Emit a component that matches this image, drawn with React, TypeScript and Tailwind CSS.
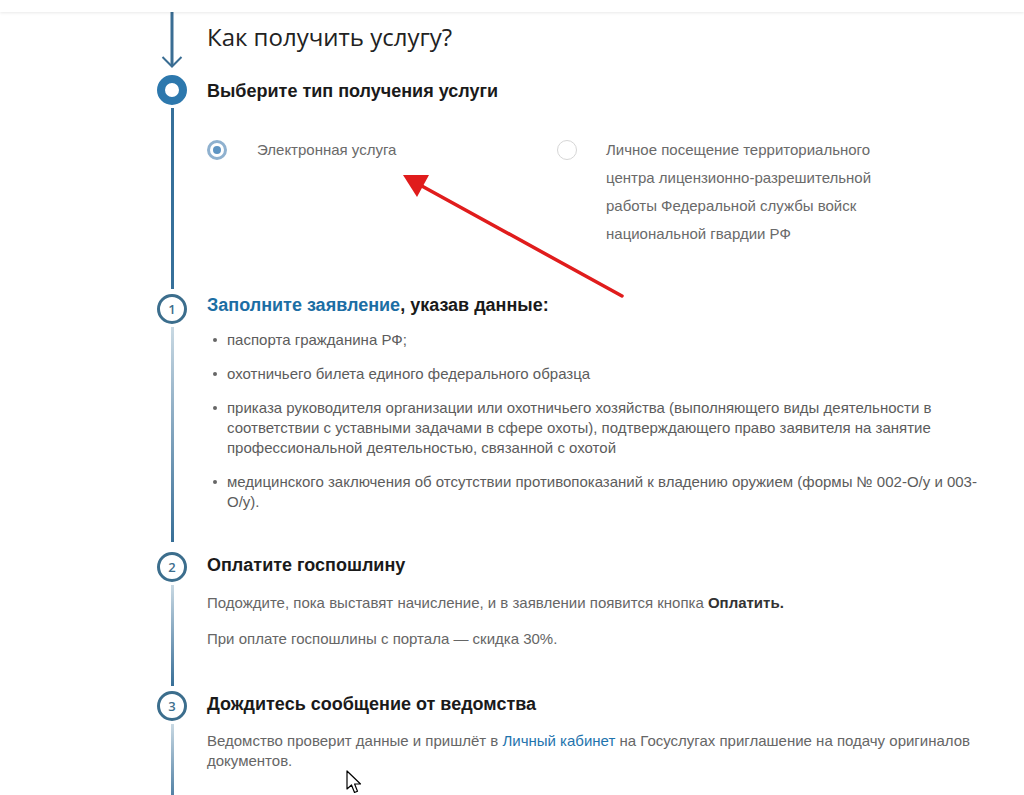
import React from 'react';

const StepNumber = ({ n }: { n: number }) => (
  <div className="flex h-[30px] w-[30px] shrink-0 items-center justify-center rounded-full border-[3px] border-[#3c6e8d] bg-white font-['Open_Sans',sans-serif] text-[13px] font-semibold leading-none text-[#3c6e8d]">
    {n}
  </div>
);

const FadeLine = () => (
  <div className="mt-[3px] w-[3px] flex-1 bg-linear-to-b from-[#c9d9e3] to-[#376f97]" />
);

const Bullet = ({ children }: { children: React.ReactNode }) => (
  <li className="flex">
    <span className="ml-[6px] mt-[8px] h-[4px] w-[4px] shrink-0 rounded-full bg-[#666]" />
    <span className="ml-[10px]">{children}</span>
  </li>
);

const App: React.FC = () => {
  const bullets = [
    'паспорта гражданина РФ;',
    'охотничьего билета единого федерального образца',
    'приказа руководителя организации или охотничьего хозяйства (выполняющего виды деятельности в соответствии с уставными задачами в сфере охоты), подтверждающего право заявителя на занятие профессиональной деятельностью, связанной с охотой',
    'медицинского заключения об отсутствии противопоказаний к владению оружием (формы № 002-О/у и 003-О/у).',
  ];

  return (
    <div className="relative h-[795px] overflow-hidden bg-white font-['Liberation_Sans',Arial,sans-serif]">
      <div className="relative z-10 h-[12px] bg-white shadow-[0_1px_3px_rgba(0,0,0,0.09)]" />

      <div className="pl-[157px] pr-[39px]">
        {/* title row */}
        <div className="flex h-[63px]">
          <div className="w-[30px] shrink-0">
            <svg width="30" height="63" viewBox="0 0 30 63" fill="none">
              <line x1="15" y1="0" x2="15" y2="54" stroke="#3a6d93" strokeWidth="3" />
              <polyline points="5.5,45 15,54.5 24.5,45" stroke="#3a6d93" strokeWidth="2" />
            </svg>
          </div>
          <h2 className="ml-5 pt-[10px] font-['Open_Sans',sans-serif] text-[24px] leading-[30px] text-[#222]">
            Как получить услугу?
          </h2>
        </div>

        {/* choose type */}
        <div className="flex">
          <div className="flex w-[30px] shrink-0 flex-col items-center pb-[5px]">
            <div className="h-[30px] w-[30px] rounded-full border-[8px] border-[#2d78ad] bg-white" />
            <div className="mt-[3px] w-[3px] flex-1 bg-[#36709a]" />
          </div>
          <div className="ml-5 flex-1 pb-[46px] pt-[4px]">
            <h3 className="text-[18px] font-bold leading-6 text-[#1a1a1a]">Выберите тип получения услуги</h3>
            <div className="mt-[33px] flex text-[15px] leading-[28px] text-[#6a6a6a]">
              <div className="flex w-[350px]">
                <span className="mt-[4px] flex h-5 w-5 shrink-0 items-center justify-center rounded-full border-[3px] border-[#8fb1cf]">
                  <span className="h-[8px] w-[8px] rounded-full bg-[#5f95c3]" />
                </span>
                <span className="ml-[30px]">Электронная услуга</span>
              </div>
              <div className="flex">
                <span className="mt-[4px] h-5 w-5 shrink-0 rounded-full border border-[#d6d6d6]" />
                <span className="ml-[29px] w-[285px]">
                  Личное посещение территориального центра лицензионно-разрешительной работы Федеральной службы войск
                  национальной гвардии РФ
                </span>
              </div>
            </div>
          </div>
        </div>

        {/* step 1 */}
        <div className="flex">
          <div className="flex w-[30px] shrink-0 flex-col items-center pb-[10px]">
            <StepNumber n={1} />
            <FadeLine />
          </div>
          <div className="ml-5 flex-1 pb-[40px]">
            <h3 className="-mt-[1px] text-[18px] font-bold leading-6 text-[#1a1a1a]">
              <span className="text-[#1c6ea4]">Заполните заявление</span>, указав данные:
            </h3>
            <ul className="mt-[13px] flex flex-col gap-[14px] text-[15px] leading-5 text-[#5c5c5c]">
              {bullets.map((b) => (
                <Bullet key={b}>{b}</Bullet>
              ))}
            </ul>
          </div>
        </div>

        {/* step 2 */}
        <div className="flex">
          <div className="flex w-[30px] shrink-0 flex-col items-center pb-[5px]">
            <StepNumber n={2} />
            <FadeLine />
          </div>
          <div className="ml-5 flex-1 pb-[42px] pt-[1px]">
            <h3 className="text-[18px] font-bold leading-6 text-[#1a1a1a]">Оплатите госпошлину</h3>
            <p className="mt-[16px] text-[15px] leading-5 text-[#666]">
              Подождите, пока выставят начисление, и в заявлении появится кнопка{' '}
              <b className="text-[#333]">Оплатить.</b>
            </p>
            <p className="mt-[16px] text-[15px] leading-5 text-[#666]">При оплате госпошлины с портала — скидка 30%.</p>
          </div>
        </div>

        {/* step 3 */}
        <div className="flex">
          <div className="flex w-[30px] shrink-0 flex-col items-center">
            <StepNumber n={3} />
            <FadeLine />
          </div>
          <div className="ml-5 flex-1 pb-[40px] pt-[1px]">
            <h3 className="text-[18px] font-bold leading-6 text-[#1a1a1a]">Дождитесь сообщение от ведомства</h3>
            <p className="mt-[15px] text-[15px] leading-5 text-[#666]">
              Ведомство проверит данные и пришлёт в <span className="text-[#1f74ad]">Личный кабинет</span> на Госуслугах
              приглашение на подачу оригиналов документов.
            </p>
          </div>
        </div>
      </div>

      {/* annotation arrow */}
      <svg className="pointer-events-none absolute left-0 top-0" width="1024" height="795" viewBox="0 0 1024 795">
        <line x1="622" y1="296" x2="420" y2="185" stroke="#e01c1c" strokeWidth="3.5" strokeLinecap="round" />
        <polygon points="403,175 429,175 417,197" fill="#e01c1c" />
      </svg>

      {/* mouse cursor */}
      <svg className="pointer-events-none absolute left-[346px] top-[770px]" width="18" height="26" viewBox="0 0 18 26">
        <path
          d="M1 1 L1 19 L5.5 15 L8.5 22.5 L11.5 21.2 L8.6 14 L14.5 14 Z"
          fill="#fff"
          stroke="#000"
          strokeWidth="1.2"
          strokeLinejoin="round"
        />
      </svg>
    </div>
  );
};

export default App;
